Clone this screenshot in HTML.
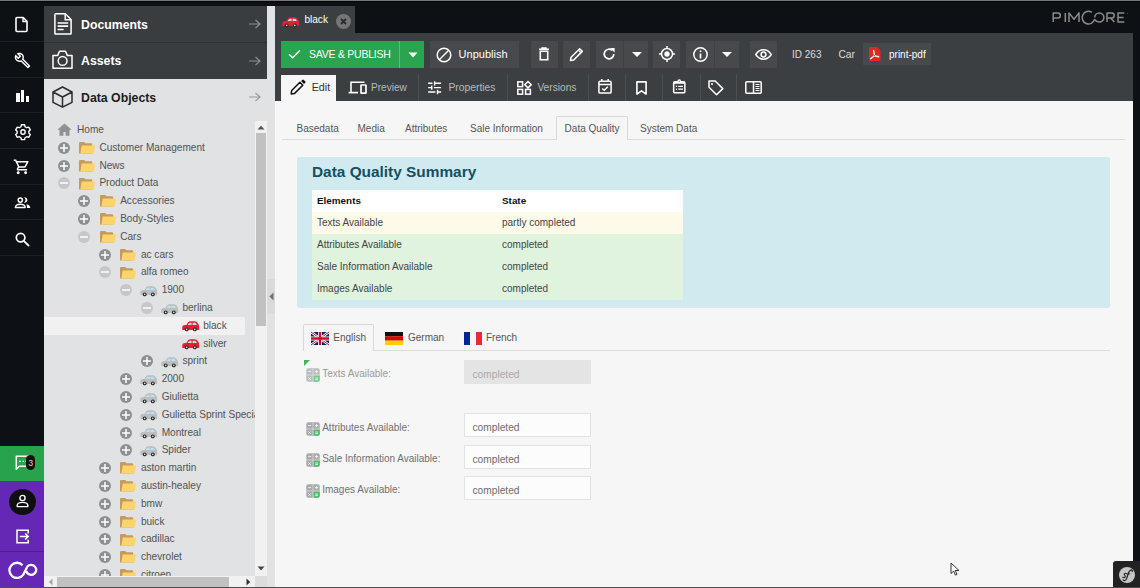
<!DOCTYPE html><html><head><meta charset="utf-8"><style>
*{box-sizing:border-box;margin:0;padding:0}
html,body{width:1140px;height:588px;overflow:hidden;background:#0d1014;font-family:"Liberation Sans",sans-serif}
body{position:relative}
div,span,svg{position:absolute}
.t{white-space:nowrap;line-height:1}
svg{overflow:visible}
</style></head><body><div style="left:0px;top:0px;width:1140px;height:1px;background:#77777b;"></div>
<div style="left:0px;top:1px;width:1140px;height:1px;background:#050608;"></div>
<div style="left:0px;top:41px;width:44px;height:1px;background:#1c1f23;"></div>
<div style="left:0px;top:77px;width:44px;height:1px;background:#1c1f23;"></div>
<div style="left:0px;top:112px;width:44px;height:1px;background:#1c1f23;"></div>
<div style="left:0px;top:148px;width:44px;height:1px;background:#1c1f23;"></div>
<div style="left:0px;top:184px;width:44px;height:1px;background:#1c1f23;"></div>
<div style="left:0px;top:219px;width:44px;height:1px;background:#1c1f23;"></div>
<div style="left:0px;top:255px;width:44px;height:1px;background:#1c1f23;"></div>
<svg style="left:15px;top:16px;" width="14" height="17" viewBox="0 0 14 17"><path d="M2 1.5h6.2l3.8 3.9v9.1a1 1 0 0 1-1 1H2a1 1 0 0 1-1-1V2.5a1 1 0 0 1 1-1z" fill="none" stroke="#fff" stroke-width="1.6" stroke-linejoin="round"/><path d="M8 1.5v4h4" fill="none" stroke="#fff" stroke-width="1.4"/></svg>
<svg style="left:13.5px;top:51.5px;" width="17" height="17" viewBox="0 0 24 24"><path d="M22.61 18.99l-9.08-9.08c.93-2.34.45-5.1-1.44-7C9.79.61 6.21.4 3.66 2.26L7.5 6.11 6.08 7.52 2.25 3.69C.39 6.23.6 9.82 2.9 12.11c1.86 1.86 4.57 2.35 6.89 1.48l9.11 9.11c.39.39 1.02.39 1.41 0l2.3-2.3c.4-.38.4-1.01 0-1.41zm-3 1.6l-9.46-9.46c-.61.45-1.29.72-2 .82-1.36.2-2.79-.21-3.830-1.25C3.37 9.76 2.93 8.5 3 7.26l3.09 3.09 4.24-4.24-3.09-3.09c1.24-.07 2.49.37 3.44 1.31 1.08 1.08 1.49 2.570 1.24 3.96-.12.71-.42 1.37-.88 1.96l9.45 9.45-.88.89z" fill="#fff"/></svg>
<div style="left:16px;top:93px;width:3.5px;height:9px;background:#ffffff;"></div>
<div style="left:21px;top:90px;width:3.4px;height:12px;background:#ffffff;"></div>
<div style="left:25.5px;top:96px;width:3.3px;height:6px;background:#ffffff;"></div>
<svg style="left:14.5px;top:123.5px;" width="16" height="16" viewBox="0 0 16 16"><g transform="translate(8 8)"><path d="M-1.6-7.2h3.2l.5 2a5.5 5.5 0 0 1 1.6.9l2-.6 1.6 2.8-1.5 1.4a5.5 5.5 0 0 1 0 1.8l1.5 1.4-1.6 2.8-2-.6a5.5 5.5 0 0 1-1.6.9l-.5 2h-3.2l-.5-2a5.5 5.5 0 0 1-1.6-.9l-2 .6-1.6-2.8 1.5-1.4a5.5 5.5 0 0 1 0-1.8l-1.5-1.4 1.6-2.8 2 .6a5.5 5.5 0 0 1 1.6-.9z" fill="none" stroke="#fff" stroke-width="1.4" stroke-linejoin="round"/><circle r="2.2" fill="none" stroke="#fff" stroke-width="1.4"/></g></svg>
<svg style="left:13.3px;top:158.4px;" width="17.8" height="17.8" viewBox="0 0 24 24"><path d="M15.55 13c.75 0 1.41-.41 1.75-1.03l3.58-6.49A.996.996 0 0 0 20.010 4H5.21l-.94-2H1v2h2l3.6 7.59-1.35 2.44C4.52 15.37 5.48 17 7 17h12v-2H7l1.1-2h7.45zM6.16 6h12.15l-2.76 5H8.53L6.16 6zM7 18c-1.1 0-1.99.9-1.99 2S5.9 22 7 22s2-.9 2-2-.9-2-2-2zm10 0c-1.1 0-1.99.9-1.99 2s.89 2 1.99 2 2-.9 2-2-.9-2-2-2z" fill="#fff"/></svg>
<svg style="left:14px;top:197px;" width="17" height="12" viewBox="0 0 17 12"><circle cx="6.3" cy="3.1" r="2.1" fill="none" stroke="#fff" stroke-width="1.5"/><path d="M9.9 .3Q13.4.6 13.4 3.1Q13.4 5.6 9.9 5.9Q11.5 4.8 11.5 3.1Q11.5 1.4 9.9.3Z" fill="#fff"/><path d="M1.4 10.4C1.6 8 3.8 7.3 6.3 7.3S11 8 11.2 10.4Z" fill="none" stroke="#fff" stroke-width="1.5" stroke-linejoin="round"/><path d="M12.4 7.3Q16.2 8 16.3 11.1H13Q13 8.8 12.4 7.3Z" fill="#fff"/></svg>
<svg style="left:15px;top:232px;" width="15" height="14" viewBox="0 0 15 14"><circle cx="5.6" cy="5.6" r="4.3" fill="none" stroke="#fff" stroke-width="1.7"/><path d="M8.8 8.8l4.8 4.8" stroke="#fff" stroke-width="1.9" stroke-linecap="round"/></svg>
<div style="left:0px;top:446px;width:44px;height:35px;background:#29a24c;"></div>
<svg style="left:14.5px;top:454.6px;" width="22" height="18" viewBox="0 0 22 18"><path d="M1.3 1.3h14v10h-11l-3 3z" fill="none" stroke="#fff" stroke-width="1.5" stroke-linejoin="round"/><circle cx="5" cy="6.3" r=".9" fill="#fff"/><circle cx="8.2" cy="6.3" r=".9" fill="#fff"/><circle cx="11.4" cy="6.3" r=".9" fill="#fff"/></svg>
<div style="left:26.1px;top:454.7px;width:9.2px;height:15px;background:#111;border-radius:4.6px"></div>
<span class="t" style="left:28.4px;top:459.6px;font-size:8.2px;color:#e6dccc;font-weight:400;">3</span>
<div style="left:0px;top:481px;width:44px;height:107px;background:#6428b4;"></div>
<div style="left:0px;top:551px;width:44px;height:1px;background:#4e1f90;"></div>
<div style="left:9px;top:489px;width:27px;height:26px;border-radius:50%;background:#0f0f12"></div>
<svg style="left:15px;top:494px;" width="15" height="14" viewBox="0 0 15 14"><circle cx="7.5" cy="4" r="2.6" fill="none" stroke="#fff" stroke-width="1.4"/><path d="M2.2 12.6v-1.2c0-1.8 2.6-3 5.3-3s5.3 1.2 5.3 3v1.2z" fill="none" stroke="#fff" stroke-width="1.4" stroke-linejoin="round"/></svg>
<svg style="left:15px;top:529px;" width="15" height="15" viewBox="0 0 15 15"><path d="M6 1.2H2v12.6h11.2v-3M13.2 4.5V1.2H6" fill="none" stroke="#fff" stroke-width="1.5"/><path d="M4.8 7.5h8.4M10.2 4.5l3 3-3 3" fill="none" stroke="#fff" stroke-width="1.5"/></svg>
<svg style="left:4px;top:554px;" width="38" height="32" viewBox="0 0 38 32"><path d="M18.6 11.2A7.6 7.6 0 1 0 19.3 20.6L23.4 12.6A5 5 0 1 1 22.3 16.9" fill="none" stroke="#fff" stroke-width="2.3"/></svg>
<div style="left:44px;top:6px;width:231px;height:581px;background:#e1e2e3;"></div>
<div style="left:44px;top:6px;width:223px;height:36px;background:#3a3d40;"></div>
<div style="left:44px;top:42px;width:223px;height:1px;background:#2f3235;"></div>
<div style="left:44px;top:43px;width:223px;height:36px;background:#3a3d40;"></div>
<div style="left:267px;top:6px;width:8px;height:581px;background:#e1e2e3;"></div>
<span class="t" style="left:81px;top:18.6px;font-size:12.3px;color:#ffffff;font-weight:700;">Documents</span>
<span class="t" style="left:81px;top:55.2px;font-size:12.3px;color:#ffffff;font-weight:700;">Assets</span>
<span class="t" style="left:81px;top:91.6px;font-size:12.3px;color:#1b1d1f;font-weight:700;">Data Objects</span>
<svg style="left:54px;top:13px;" width="18" height="22" viewBox="0 0 18 22"><path d="M1.6 .8H11.4L17.1 6.6V20.4Q17.1 21.1 16.4 21.1H1.6Q.9 21.1.9 20.4V1.5Q.9.8 1.6.8Z" fill="none" stroke="#fff" stroke-width="1.5" stroke-linejoin="round"/><path d="M11.2 .9V6.8H17" fill="none" stroke="#fff" stroke-width="1.4"/><path d="M3.6 10h10.6M3.6 13.2h10.6M3.6 16.5h6" stroke="#fff" stroke-width="1.7"/></svg>
<svg style="left:52px;top:50px;" width="21" height="20" viewBox="0 0 21 20"><path d="M1 5.6H5.6L7.5 1.2H13.5L15.4 5.6H20V18.3H1Z" fill="none" stroke="#fff" stroke-width="1.5" stroke-linejoin="round"/><circle cx="10.6" cy="10.9" r="4.4" fill="none" stroke="#fff" stroke-width="1.5"/></svg>
<svg style="left:52px;top:85.5px;" width="21" height="22" viewBox="0 0 21 22"><path d="M10.5 1L20 6V16.3L10.5 21.2 1 16.3V6Z M1 6L10.5 11 20 6M10.5 11V21.2" fill="none" stroke="#2a2c2e" stroke-width="1.5" stroke-linejoin="round"/></svg>
<svg style="left:248px;top:19.2px;" width="14" height="10" viewBox="0 0 14 10"><path d="M1 5h11M7.5 1l4.5 4-4.5 4" fill="none" stroke="#8a8c8e" stroke-width="1.2"/></svg>
<svg style="left:248px;top:55.7px;" width="14" height="10" viewBox="0 0 14 10"><path d="M1 5h11M7.5 1l4.5 4-4.5 4" fill="none" stroke="#8a8c8e" stroke-width="1.2"/></svg>
<svg style="left:248px;top:92px;" width="14" height="10" viewBox="0 0 14 10"><path d="M1 5h11M7.5 1l4.5 4-4.5 4" fill="none" stroke="#9a9c9e" stroke-width="1.2"/></svg>
<div style="left:44px;top:115px;width:211px;height:461px;overflow:hidden">
<svg style="left:13px;top:7.9999999999999885px;" width="15" height="13" viewBox="0 0 15 13"><path d="M7.5.5L.3 6.8h2.2v5.9h3.9V9h2.2v3.7h3.9V6.8h2.2z" fill="#8f9193"/></svg>
<span class="t" style="left:33px;top:9.949999999999989px;font-size:10.1px;color:#505254;font-weight:400;">Home</span>
<svg style="left:13.5px;top:26.700000000000003px;" width="12" height="12" viewBox="0 0 12 12"><circle cx="6" cy="6" r="6" fill="#8e8f91"/><path d="M2 6h8" stroke="#fff" stroke-width="1.5"/><path d="M6 2v8" stroke="#fff" stroke-width="1.5"/></svg>
<svg style="left:34.8px;top:26.900000000000002px;" width="17" height="12" viewBox="0 0 17 12"><path d="M0 1Q0 0 1 0H5.2L6.4 1.3H12.3Q13.2 1.3 13.2 2.2V11.6H0Z" fill="#c59b5d"/><path d="M2.7 3.4H16.1L14.8 11.6H1.4Z" fill="#fdd36c"/></svg>
<span class="t" style="left:55.4px;top:27.75px;font-size:10.1px;color:#505254;font-weight:400;">Customer Management</span>
<svg style="left:13.5px;top:44.499999999999986px;" width="12" height="12" viewBox="0 0 12 12"><circle cx="6" cy="6" r="6" fill="#8e8f91"/><path d="M2 6h8" stroke="#fff" stroke-width="1.5"/><path d="M6 2v8" stroke="#fff" stroke-width="1.5"/></svg>
<svg style="left:34.8px;top:44.69999999999998px;" width="17" height="12" viewBox="0 0 17 12"><path d="M0 1Q0 0 1 0H5.2L6.4 1.3H12.3Q13.2 1.3 13.2 2.2V11.6H0Z" fill="#c59b5d"/><path d="M2.7 3.4H16.1L14.8 11.6H1.4Z" fill="#fdd36c"/></svg>
<span class="t" style="left:55.4px;top:45.54999999999998px;font-size:10.1px;color:#505254;font-weight:400;">News</span>
<svg style="left:13.5px;top:62.29999999999999px;" width="12" height="12" viewBox="0 0 12 12"><circle cx="6" cy="6" r="6" fill="#c6c7c9"/><path d="M2 6h8" stroke="#fff" stroke-width="1.5"/></svg>
<svg style="left:34.8px;top:62.499999999999986px;" width="17" height="12" viewBox="0 0 17 12"><path d="M0 1Q0 0 1 0H5.2L6.4 1.3H12.3Q13.2 1.3 13.2 2.2V11.6H0Z" fill="#c59b5d"/><path d="M2.7 3.4H16.1L14.8 11.6H1.4Z" fill="#fdd36c"/></svg>
<span class="t" style="left:55.4px;top:63.349999999999994px;font-size:10.1px;color:#505254;font-weight:400;">Product Data</span>
<svg style="left:34.25px;top:80.09999999999997px;" width="12" height="12" viewBox="0 0 12 12"><circle cx="6" cy="6" r="6" fill="#8e8f91"/><path d="M2 6h8" stroke="#fff" stroke-width="1.5"/><path d="M6 2v8" stroke="#fff" stroke-width="1.5"/></svg>
<svg style="left:55.55px;top:80.29999999999997px;" width="17" height="12" viewBox="0 0 17 12"><path d="M0 1Q0 0 1 0H5.2L6.4 1.3H12.3Q13.2 1.3 13.2 2.2V11.6H0Z" fill="#c59b5d"/><path d="M2.7 3.4H16.1L14.8 11.6H1.4Z" fill="#fdd36c"/></svg>
<span class="t" style="left:76.15px;top:81.14999999999998px;font-size:10.1px;color:#505254;font-weight:400;">Accessories</span>
<svg style="left:34.25px;top:97.89999999999998px;" width="12" height="12" viewBox="0 0 12 12"><circle cx="6" cy="6" r="6" fill="#8e8f91"/><path d="M2 6h8" stroke="#fff" stroke-width="1.5"/><path d="M6 2v8" stroke="#fff" stroke-width="1.5"/></svg>
<svg style="left:55.55px;top:98.09999999999998px;" width="17" height="12" viewBox="0 0 17 12"><path d="M0 1Q0 0 1 0H5.2L6.4 1.3H12.3Q13.2 1.3 13.2 2.2V11.6H0Z" fill="#c59b5d"/><path d="M2.7 3.4H16.1L14.8 11.6H1.4Z" fill="#fdd36c"/></svg>
<span class="t" style="left:76.15px;top:98.94999999999999px;font-size:10.1px;color:#505254;font-weight:400;">Body-Styles</span>
<svg style="left:34.25px;top:115.69999999999999px;" width="12" height="12" viewBox="0 0 12 12"><circle cx="6" cy="6" r="6" fill="#c6c7c9"/><path d="M2 6h8" stroke="#fff" stroke-width="1.5"/></svg>
<svg style="left:55.55px;top:115.89999999999999px;" width="17" height="12" viewBox="0 0 17 12"><path d="M0 1Q0 0 1 0H5.2L6.4 1.3H12.3Q13.2 1.3 13.2 2.2V11.6H0Z" fill="#c59b5d"/><path d="M2.7 3.4H16.1L14.8 11.6H1.4Z" fill="#fdd36c"/></svg>
<span class="t" style="left:76.15px;top:116.75px;font-size:10.1px;color:#505254;font-weight:400;">Cars</span>
<svg style="left:55.0px;top:133.5px;" width="12" height="12" viewBox="0 0 12 12"><circle cx="6" cy="6" r="6" fill="#8e8f91"/><path d="M2 6h8" stroke="#fff" stroke-width="1.5"/><path d="M6 2v8" stroke="#fff" stroke-width="1.5"/></svg>
<svg style="left:76.3px;top:133.70000000000002px;" width="17" height="12" viewBox="0 0 17 12"><path d="M0 1Q0 0 1 0H5.2L6.4 1.3H12.3Q13.2 1.3 13.2 2.2V11.6H0Z" fill="#c59b5d"/><path d="M2.7 3.4H16.1L14.8 11.6H1.4Z" fill="#fdd36c"/></svg>
<span class="t" style="left:96.9px;top:134.55px;font-size:10.1px;color:#505254;font-weight:400;">ac cars</span>
<svg style="left:55.0px;top:151.3px;" width="12" height="12" viewBox="0 0 12 12"><circle cx="6" cy="6" r="6" fill="#c6c7c9"/><path d="M2 6h8" stroke="#fff" stroke-width="1.5"/></svg>
<svg style="left:76.3px;top:151.50000000000003px;" width="17" height="12" viewBox="0 0 17 12"><path d="M0 1Q0 0 1 0H5.2L6.4 1.3H12.3Q13.2 1.3 13.2 2.2V11.6H0Z" fill="#c59b5d"/><path d="M2.7 3.4H16.1L14.8 11.6H1.4Z" fill="#fdd36c"/></svg>
<span class="t" style="left:96.9px;top:152.35000000000002px;font-size:10.1px;color:#505254;font-weight:400;">alfa romeo</span>
<svg style="left:75.75px;top:169.09999999999997px;" width="12" height="12" viewBox="0 0 12 12"><circle cx="6" cy="6" r="6" fill="#c6c7c9"/><path d="M2 6h8" stroke="#fff" stroke-width="1.5"/></svg>
<svg style="left:96.25px;top:170.69999999999996px;" width="18" height="11" viewBox="0 0 18 11"><path d="M.3 8.6V6Q.3 4.6 1.8 4.3L4.6 3.8Q5.8 1.2 7.2.6Q8 .3 9 .3H12.8Q14.5.3 15.6 1.8Q17.2 3.8 17.2 6.2V8.6Q17.2 9.1 16.7 9.1H.8Q.3 9.1.3 8.6Z" fill="#bdbdbd"/><path d="M5.6 4.1Q6.6 2 8 1.8H9.6V4.1ZM10.6 4.1V1.8H13Q14.3 2 14.8 4.1Z" fill="#b8e4f4"/><circle cx="4.7" cy="8.4" r="1.9" fill="#222"/><circle cx="12.8" cy="8.4" r="1.9" fill="#222"/><circle cx="4.7" cy="8.4" r=".8" fill="#e8e8e8"/><circle cx="12.8" cy="8.4" r=".8" fill="#e8e8e8"/></svg>
<span class="t" style="left:117.65px;top:170.14999999999998px;font-size:10.1px;color:#505254;font-weight:400;">1900</span>
<svg style="left:96.5px;top:186.89999999999998px;" width="12" height="12" viewBox="0 0 12 12"><circle cx="6" cy="6" r="6" fill="#c6c7c9"/><path d="M2 6h8" stroke="#fff" stroke-width="1.5"/></svg>
<svg style="left:117.0px;top:188.49999999999997px;" width="18" height="11" viewBox="0 0 18 11"><path d="M.3 8.6V6Q.3 4.6 1.8 4.3L4.6 3.8Q5.8 1.2 7.2.6Q8 .3 9 .3H12.8Q14.5.3 15.6 1.8Q17.2 3.8 17.2 6.2V8.6Q17.2 9.1 16.7 9.1H.8Q.3 9.1.3 8.6Z" fill="#bdbdbd"/><path d="M5.6 4.1Q6.6 2 8 1.8H9.6V4.1ZM10.6 4.1V1.8H13Q14.3 2 14.8 4.1Z" fill="#b8e4f4"/><circle cx="4.7" cy="8.4" r="1.9" fill="#222"/><circle cx="12.8" cy="8.4" r="1.9" fill="#222"/><circle cx="4.7" cy="8.4" r=".8" fill="#e8e8e8"/><circle cx="12.8" cy="8.4" r=".8" fill="#e8e8e8"/></svg>
<span class="t" style="left:138.4px;top:187.95px;font-size:10.1px;color:#505254;font-weight:400;">berlina</span>
<div style="left:0px;top:201.9px;width:201px;height:18.3px;background:#f1f1f2;"></div>
<svg style="left:137.75px;top:206.29999999999998px;" width="18" height="11" viewBox="0 0 18 11"><path d="M.3 8.6V6Q.3 4.6 1.8 4.3L4.6 3.8Q5.8 1.2 7.2.6Q8 .3 9 .3H12.8Q14.5.3 15.6 1.8Q17.2 3.8 17.2 6.2V8.6Q17.2 9.1 16.7 9.1H.8Q.3 9.1.3 8.6Z" fill="#e3202f"/><path d="M5.6 4.1Q6.6 2 8 1.8H9.6V4.1ZM10.6 4.1V1.8H13Q14.3 2 14.8 4.1Z" fill="#b8e4f4"/><circle cx="4.7" cy="8.4" r="1.9" fill="#222"/><circle cx="12.8" cy="8.4" r="1.9" fill="#222"/><circle cx="4.7" cy="8.4" r=".8" fill="#e8e8e8"/><circle cx="12.8" cy="8.4" r=".8" fill="#e8e8e8"/></svg>
<span class="t" style="left:159.15px;top:205.75px;font-size:10.1px;color:#505254;font-weight:400;">black</span>
<svg style="left:137.75px;top:224.1px;" width="18" height="11" viewBox="0 0 18 11"><path d="M.3 8.6V6Q.3 4.6 1.8 4.3L4.6 3.8Q5.8 1.2 7.2.6Q8 .3 9 .3H12.8Q14.5.3 15.6 1.8Q17.2 3.8 17.2 6.2V8.6Q17.2 9.1 16.7 9.1H.8Q.3 9.1.3 8.6Z" fill="#e3202f"/><path d="M5.6 4.1Q6.6 2 8 1.8H9.6V4.1ZM10.6 4.1V1.8H13Q14.3 2 14.8 4.1Z" fill="#b8e4f4"/><circle cx="4.7" cy="8.4" r="1.9" fill="#222"/><circle cx="12.8" cy="8.4" r="1.9" fill="#222"/><circle cx="4.7" cy="8.4" r=".8" fill="#e8e8e8"/><circle cx="12.8" cy="8.4" r=".8" fill="#e8e8e8"/></svg>
<span class="t" style="left:159.15px;top:223.55px;font-size:10.1px;color:#505254;font-weight:400;">silver</span>
<svg style="left:96.5px;top:240.3px;" width="12" height="12" viewBox="0 0 12 12"><circle cx="6" cy="6" r="6" fill="#8e8f91"/><path d="M2 6h8" stroke="#fff" stroke-width="1.5"/><path d="M6 2v8" stroke="#fff" stroke-width="1.5"/></svg>
<svg style="left:117.0px;top:241.9px;" width="18" height="11" viewBox="0 0 18 11"><path d="M.3 8.6V6Q.3 4.6 1.8 4.3L4.6 3.8Q5.8 1.2 7.2.6Q8 .3 9 .3H12.8Q14.5.3 15.6 1.8Q17.2 3.8 17.2 6.2V8.6Q17.2 9.1 16.7 9.1H.8Q.3 9.1.3 8.6Z" fill="#bdbdbd"/><path d="M5.6 4.1Q6.6 2 8 1.8H9.6V4.1ZM10.6 4.1V1.8H13Q14.3 2 14.8 4.1Z" fill="#b8e4f4"/><circle cx="4.7" cy="8.4" r="1.9" fill="#222"/><circle cx="12.8" cy="8.4" r="1.9" fill="#222"/><circle cx="4.7" cy="8.4" r=".8" fill="#e8e8e8"/><circle cx="12.8" cy="8.4" r=".8" fill="#e8e8e8"/></svg>
<span class="t" style="left:138.4px;top:241.35000000000002px;font-size:10.1px;color:#505254;font-weight:400;">sprint</span>
<svg style="left:75.75px;top:258.1px;" width="12" height="12" viewBox="0 0 12 12"><circle cx="6" cy="6" r="6" fill="#8e8f91"/><path d="M2 6h8" stroke="#fff" stroke-width="1.5"/><path d="M6 2v8" stroke="#fff" stroke-width="1.5"/></svg>
<svg style="left:96.25px;top:259.7px;" width="18" height="11" viewBox="0 0 18 11"><path d="M.3 8.6V6Q.3 4.6 1.8 4.3L4.6 3.8Q5.8 1.2 7.2.6Q8 .3 9 .3H12.8Q14.5.3 15.6 1.8Q17.2 3.8 17.2 6.2V8.6Q17.2 9.1 16.7 9.1H.8Q.3 9.1.3 8.6Z" fill="#bdbdbd"/><path d="M5.6 4.1Q6.6 2 8 1.8H9.6V4.1ZM10.6 4.1V1.8H13Q14.3 2 14.8 4.1Z" fill="#b8e4f4"/><circle cx="4.7" cy="8.4" r="1.9" fill="#222"/><circle cx="12.8" cy="8.4" r="1.9" fill="#222"/><circle cx="4.7" cy="8.4" r=".8" fill="#e8e8e8"/><circle cx="12.8" cy="8.4" r=".8" fill="#e8e8e8"/></svg>
<span class="t" style="left:117.65px;top:259.15px;font-size:10.1px;color:#505254;font-weight:400;">2000</span>
<svg style="left:75.75px;top:275.90000000000003px;" width="12" height="12" viewBox="0 0 12 12"><circle cx="6" cy="6" r="6" fill="#8e8f91"/><path d="M2 6h8" stroke="#fff" stroke-width="1.5"/><path d="M6 2v8" stroke="#fff" stroke-width="1.5"/></svg>
<svg style="left:96.25px;top:277.5px;" width="18" height="11" viewBox="0 0 18 11"><path d="M.3 8.6V6Q.3 4.6 1.8 4.3L4.6 3.8Q5.8 1.2 7.2.6Q8 .3 9 .3H12.8Q14.5.3 15.6 1.8Q17.2 3.8 17.2 6.2V8.6Q17.2 9.1 16.7 9.1H.8Q.3 9.1.3 8.6Z" fill="#bdbdbd"/><path d="M5.6 4.1Q6.6 2 8 1.8H9.6V4.1ZM10.6 4.1V1.8H13Q14.3 2 14.8 4.1Z" fill="#b8e4f4"/><circle cx="4.7" cy="8.4" r="1.9" fill="#222"/><circle cx="12.8" cy="8.4" r="1.9" fill="#222"/><circle cx="4.7" cy="8.4" r=".8" fill="#e8e8e8"/><circle cx="12.8" cy="8.4" r=".8" fill="#e8e8e8"/></svg>
<span class="t" style="left:117.65px;top:276.95px;font-size:10.1px;color:#505254;font-weight:400;">Giulietta</span>
<svg style="left:75.75px;top:293.70000000000005px;" width="12" height="12" viewBox="0 0 12 12"><circle cx="6" cy="6" r="6" fill="#8e8f91"/><path d="M2 6h8" stroke="#fff" stroke-width="1.5"/><path d="M6 2v8" stroke="#fff" stroke-width="1.5"/></svg>
<svg style="left:96.25px;top:295.3px;" width="18" height="11" viewBox="0 0 18 11"><path d="M.3 8.6V6Q.3 4.6 1.8 4.3L4.6 3.8Q5.8 1.2 7.2.6Q8 .3 9 .3H12.8Q14.5.3 15.6 1.8Q17.2 3.8 17.2 6.2V8.6Q17.2 9.1 16.7 9.1H.8Q.3 9.1.3 8.6Z" fill="#bdbdbd"/><path d="M5.6 4.1Q6.6 2 8 1.8H9.6V4.1ZM10.6 4.1V1.8H13Q14.3 2 14.8 4.1Z" fill="#b8e4f4"/><circle cx="4.7" cy="8.4" r="1.9" fill="#222"/><circle cx="12.8" cy="8.4" r="1.9" fill="#222"/><circle cx="4.7" cy="8.4" r=".8" fill="#e8e8e8"/><circle cx="12.8" cy="8.4" r=".8" fill="#e8e8e8"/></svg>
<span class="t" style="left:117.65px;top:294.75px;font-size:10.1px;color:#505254;font-weight:400;">Gulietta Sprint Speciale</span>
<svg style="left:75.75px;top:311.50000000000006px;" width="12" height="12" viewBox="0 0 12 12"><circle cx="6" cy="6" r="6" fill="#8e8f91"/><path d="M2 6h8" stroke="#fff" stroke-width="1.5"/><path d="M6 2v8" stroke="#fff" stroke-width="1.5"/></svg>
<svg style="left:96.25px;top:313.1px;" width="18" height="11" viewBox="0 0 18 11"><path d="M.3 8.6V6Q.3 4.6 1.8 4.3L4.6 3.8Q5.8 1.2 7.2.6Q8 .3 9 .3H12.8Q14.5.3 15.6 1.8Q17.2 3.8 17.2 6.2V8.6Q17.2 9.1 16.7 9.1H.8Q.3 9.1.3 8.6Z" fill="#bdbdbd"/><path d="M5.6 4.1Q6.6 2 8 1.8H9.6V4.1ZM10.6 4.1V1.8H13Q14.3 2 14.8 4.1Z" fill="#b8e4f4"/><circle cx="4.7" cy="8.4" r="1.9" fill="#222"/><circle cx="12.8" cy="8.4" r="1.9" fill="#222"/><circle cx="4.7" cy="8.4" r=".8" fill="#e8e8e8"/><circle cx="12.8" cy="8.4" r=".8" fill="#e8e8e8"/></svg>
<span class="t" style="left:117.65px;top:312.55px;font-size:10.1px;color:#505254;font-weight:400;">Montreal</span>
<svg style="left:75.75px;top:329.30000000000007px;" width="12" height="12" viewBox="0 0 12 12"><circle cx="6" cy="6" r="6" fill="#8e8f91"/><path d="M2 6h8" stroke="#fff" stroke-width="1.5"/><path d="M6 2v8" stroke="#fff" stroke-width="1.5"/></svg>
<svg style="left:96.25px;top:330.90000000000003px;" width="18" height="11" viewBox="0 0 18 11"><path d="M.3 8.6V6Q.3 4.6 1.8 4.3L4.6 3.8Q5.8 1.2 7.2.6Q8 .3 9 .3H12.8Q14.5.3 15.6 1.8Q17.2 3.8 17.2 6.2V8.6Q17.2 9.1 16.7 9.1H.8Q.3 9.1.3 8.6Z" fill="#bdbdbd"/><path d="M5.6 4.1Q6.6 2 8 1.8H9.6V4.1ZM10.6 4.1V1.8H13Q14.3 2 14.8 4.1Z" fill="#b8e4f4"/><circle cx="4.7" cy="8.4" r="1.9" fill="#222"/><circle cx="12.8" cy="8.4" r="1.9" fill="#222"/><circle cx="4.7" cy="8.4" r=".8" fill="#e8e8e8"/><circle cx="12.8" cy="8.4" r=".8" fill="#e8e8e8"/></svg>
<span class="t" style="left:117.65px;top:330.35px;font-size:10.1px;color:#505254;font-weight:400;">Spider</span>
<svg style="left:55.0px;top:347.1px;" width="12" height="12" viewBox="0 0 12 12"><circle cx="6" cy="6" r="6" fill="#8e8f91"/><path d="M2 6h8" stroke="#fff" stroke-width="1.5"/><path d="M6 2v8" stroke="#fff" stroke-width="1.5"/></svg>
<svg style="left:76.3px;top:347.3px;" width="17" height="12" viewBox="0 0 17 12"><path d="M0 1Q0 0 1 0H5.2L6.4 1.3H12.3Q13.2 1.3 13.2 2.2V11.6H0Z" fill="#c59b5d"/><path d="M2.7 3.4H16.1L14.8 11.6H1.4Z" fill="#fdd36c"/></svg>
<span class="t" style="left:96.9px;top:348.15px;font-size:10.1px;color:#505254;font-weight:400;">aston martin</span>
<svg style="left:55.0px;top:364.90000000000003px;" width="12" height="12" viewBox="0 0 12 12"><circle cx="6" cy="6" r="6" fill="#8e8f91"/><path d="M2 6h8" stroke="#fff" stroke-width="1.5"/><path d="M6 2v8" stroke="#fff" stroke-width="1.5"/></svg>
<svg style="left:76.3px;top:365.1px;" width="17" height="12" viewBox="0 0 17 12"><path d="M0 1Q0 0 1 0H5.2L6.4 1.3H12.3Q13.2 1.3 13.2 2.2V11.6H0Z" fill="#c59b5d"/><path d="M2.7 3.4H16.1L14.8 11.6H1.4Z" fill="#fdd36c"/></svg>
<span class="t" style="left:96.9px;top:365.95px;font-size:10.1px;color:#505254;font-weight:400;">austin-healey</span>
<svg style="left:55.0px;top:382.70000000000005px;" width="12" height="12" viewBox="0 0 12 12"><circle cx="6" cy="6" r="6" fill="#8e8f91"/><path d="M2 6h8" stroke="#fff" stroke-width="1.5"/><path d="M6 2v8" stroke="#fff" stroke-width="1.5"/></svg>
<svg style="left:76.3px;top:382.90000000000003px;" width="17" height="12" viewBox="0 0 17 12"><path d="M0 1Q0 0 1 0H5.2L6.4 1.3H12.3Q13.2 1.3 13.2 2.2V11.6H0Z" fill="#c59b5d"/><path d="M2.7 3.4H16.1L14.8 11.6H1.4Z" fill="#fdd36c"/></svg>
<span class="t" style="left:96.9px;top:383.75px;font-size:10.1px;color:#505254;font-weight:400;">bmw</span>
<svg style="left:55.0px;top:400.5px;" width="12" height="12" viewBox="0 0 12 12"><circle cx="6" cy="6" r="6" fill="#8e8f91"/><path d="M2 6h8" stroke="#fff" stroke-width="1.5"/><path d="M6 2v8" stroke="#fff" stroke-width="1.5"/></svg>
<svg style="left:76.3px;top:400.7px;" width="17" height="12" viewBox="0 0 17 12"><path d="M0 1Q0 0 1 0H5.2L6.4 1.3H12.3Q13.2 1.3 13.2 2.2V11.6H0Z" fill="#c59b5d"/><path d="M2.7 3.4H16.1L14.8 11.6H1.4Z" fill="#fdd36c"/></svg>
<span class="t" style="left:96.9px;top:401.54999999999995px;font-size:10.1px;color:#505254;font-weight:400;">buick</span>
<svg style="left:55.0px;top:418.30000000000007px;" width="12" height="12" viewBox="0 0 12 12"><circle cx="6" cy="6" r="6" fill="#8e8f91"/><path d="M2 6h8" stroke="#fff" stroke-width="1.5"/><path d="M6 2v8" stroke="#fff" stroke-width="1.5"/></svg>
<svg style="left:76.3px;top:418.50000000000006px;" width="17" height="12" viewBox="0 0 17 12"><path d="M0 1Q0 0 1 0H5.2L6.4 1.3H12.3Q13.2 1.3 13.2 2.2V11.6H0Z" fill="#c59b5d"/><path d="M2.7 3.4H16.1L14.8 11.6H1.4Z" fill="#fdd36c"/></svg>
<span class="t" style="left:96.9px;top:419.35px;font-size:10.1px;color:#505254;font-weight:400;">cadillac</span>
<svg style="left:55.0px;top:436.10000000000014px;" width="12" height="12" viewBox="0 0 12 12"><circle cx="6" cy="6" r="6" fill="#8e8f91"/><path d="M2 6h8" stroke="#fff" stroke-width="1.5"/><path d="M6 2v8" stroke="#fff" stroke-width="1.5"/></svg>
<svg style="left:76.3px;top:436.3000000000001px;" width="17" height="12" viewBox="0 0 17 12"><path d="M0 1Q0 0 1 0H5.2L6.4 1.3H12.3Q13.2 1.3 13.2 2.2V11.6H0Z" fill="#c59b5d"/><path d="M2.7 3.4H16.1L14.8 11.6H1.4Z" fill="#fdd36c"/></svg>
<span class="t" style="left:96.9px;top:437.1500000000001px;font-size:10.1px;color:#505254;font-weight:400;">chevrolet</span>
<svg style="left:55.0px;top:453.9000000000001px;" width="12" height="12" viewBox="0 0 12 12"><circle cx="6" cy="6" r="6" fill="#8e8f91"/><path d="M2 6h8" stroke="#fff" stroke-width="1.5"/><path d="M6 2v8" stroke="#fff" stroke-width="1.5"/></svg>
<svg style="left:76.3px;top:454.1000000000001px;" width="17" height="12" viewBox="0 0 17 12"><path d="M0 1Q0 0 1 0H5.2L6.4 1.3H12.3Q13.2 1.3 13.2 2.2V11.6H0Z" fill="#c59b5d"/><path d="M2.7 3.4H16.1L14.8 11.6H1.4Z" fill="#fdd36c"/></svg>
<span class="t" style="left:96.9px;top:454.95000000000005px;font-size:10.1px;color:#505254;font-weight:400;">citroen</span>
</div>
<div style="left:255px;top:121px;width:12px;height:455px;background:#f1f1f1;"></div>
<div style="left:256px;top:133px;width:10px;height:193px;background:#c1c1c1;"></div>
<svg style="left:257px;top:125px;" width="8" height="5" viewBox="0 0 8 5"><path d="M.5 4.5L4 .8l3.5 3.7z" fill="#555"/></svg>
<svg style="left:257px;top:566px;" width="8" height="5" viewBox="0 0 8 5"><path d="M.5.5L4 4.2 7.5.5z" fill="#444"/></svg>
<div style="left:44px;top:576px;width:211px;height:11px;background:#f1f1f1;"></div>
<div style="left:57px;top:577px;width:172px;height:10px;background:#c1c1c1;"></div>
<svg style="left:48px;top:578px;" width="5" height="8" viewBox="0 0 5 8"><path d="M4.5.5L.8 4l3.7 3.5z" fill="#aaa"/></svg>
<svg style="left:246px;top:578px;" width="5" height="8" viewBox="0 0 5 8"><path d="M.5.5L4.2 4 .5 7.5z" fill="#333"/></svg>
<div style="left:255px;top:576px;width:12px;height:11px;background:#dcdcdc;"></div>
<div style="left:267px;top:279px;width:8px;height:35px;background:#d9dadb;"></div>
<svg style="left:268.5px;top:292px;" width="5" height="9" viewBox="0 0 5 9"><path d="M4.5.5L.5 4.5l4 4z" fill="#6d6f71"/></svg>
<div style="left:275px;top:6px;width:80px;height:27px;background:#3c3f42;"></div>
<div style="left:275px;top:33px;width:858px;height:68px;background:#3c3f42;"></div>
<div style="left:275px;top:101px;width:858px;height:486px;background:#f6f6f6;"></div>
<div style="left:1133px;top:2px;width:7px;height:586px;background:#0d1014;"></div>
<svg style="left:282.2px;top:17px;" width="18" height="11" viewBox="0 0 18 11"><path d="M.3 8.6V6Q.3 4.6 1.8 4.3L4.6 3.8Q5.8 1.2 7.2.6Q8 .3 9 .3H12.8Q14.5.3 15.6 1.8Q17.2 3.8 17.2 6.2V8.6Q17.2 9.1 16.7 9.1H.8Q.3 9.1.3 8.6Z" fill="#e3202f"/><path d="M5.6 4.1Q6.6 2 8 1.8H9.6V4.1ZM10.6 4.1V1.8H13Q14.3 2 14.8 4.1Z" fill="#b8e4f4"/><circle cx="4.7" cy="8.4" r="1.9" fill="#222"/><circle cx="12.8" cy="8.4" r="1.9" fill="#222"/><circle cx="4.7" cy="8.4" r=".8" fill="#e8e8e8"/><circle cx="12.8" cy="8.4" r=".8" fill="#e8e8e8"/></svg>
<span class="t" style="left:304.4px;top:15.2px;font-size:10.1px;color:#ffffff;font-weight:400;">black</span>
<div style="left:336px;top:14px;width:15px;height:15px;border-radius:50%;background:#757678"></div>
<svg style="left:340px;top:18px;" width="7" height="7" viewBox="0 0 7 7"><path d="M1 1l5 5M6 1L1 6" stroke="#2a2b2c" stroke-width="1.8"/></svg>
<svg style="left:1048px;top:6.5px;" width="84" height="22" viewBox="0 0 84 22"><g fill="none" stroke="#8b8b8b" stroke-width="1.5" stroke-linejoin="round"><path d="M5.2 15.1V5.9H10Q12.3 5.9 12.3 8.45Q12.3 11 10 11H5.2M17.3 5.9V15.1M21 15.1V5.9L26 12.2 31 5.9V15.1"/><path d="M43.8 5.3A6.3 6.3 0 1 0 46.5 12.5Q48.6 15.1 51.3 15.1A4.6 4.6 0 1 0 46.7 10.5"/><path d="M59 15.1V5.9H63.8Q66.2 5.9 66.2 8.45Q66.2 11 63.8 11H59M62.5 11L66.4 15.1M76.3 5.9H70V15.1H76.3M70 10.5H75.6"/></g><circle cx="79.6" cy="6.3" r=".5" fill="#666"/></svg>
<div style="left:281px;top:41px;width:143px;height:27px;background:#2aa44e;"></div>
<div style="left:399px;top:41px;width:1px;height:27px;background:#5fbd79;"></div>
<svg style="left:288px;top:49px;" width="13" height="10" viewBox="0 0 13 10"><path d="M1 5.2l3.6 3.6L12 1.2" fill="none" stroke="#fff" stroke-width="1.5"/></svg>
<span class="t" style="left:309px;top:49.1px;font-size:10.5px;color:#ffffff;font-weight:400;letter-spacing:-0.25px">SAVE &amp; PUBLISH</span>
<svg style="left:408px;top:51.5px;" width="10" height="6" viewBox="0 0 10 6"><path d="M.5.5h9L5 5.5z" fill="#fff"/></svg>
<div style="left:430px;top:41px;width:89px;height:27px;background:#47494c;"></div>
<svg style="left:436px;top:47px;" width="16" height="16" viewBox="0 0 16 16"><circle cx="8" cy="8" r="6.8" fill="none" stroke="#fff" stroke-width="1.5"/><path d="M3.3 12.7l9.4-9.4" stroke="#fff" stroke-width="1.5"/></svg>
<span class="t" style="left:458.6px;top:49.2px;font-size:11px;color:#ffffff;font-weight:400;">Unpublish</span>
<div style="left:531px;top:41px;width:27px;height:27px;background:#47494c;"></div>
<svg style="left:538px;top:47px;" width="12" height="14" viewBox="0 0 12 14"><path d="M1 2.2h10M4 2.2V1h4v1.2" fill="none" stroke="#fff" stroke-width="1.4"/><path d="M2.3 4.2h7.4v8.6H2.3z" fill="none" stroke="#fff" stroke-width="1.6"/></svg>
<div style="left:563px;top:41px;width:27px;height:27px;background:#47494c;"></div>
<svg style="left:569px;top:47px;" width="15" height="15" viewBox="0 0 15 15"><path d="M1.5 13.5l.6-3.3 8.5-8.5 2.7 2.7-8.5 8.5z" fill="none" stroke="#fff" stroke-width="1.5" stroke-linejoin="round"/><path d="M9.2 3.1l2.7 2.7" stroke="#fff" stroke-width="1.4"/></svg>
<div style="left:596px;top:41px;width:52px;height:27px;background:#47494c;"></div>
<div style="left:623px;top:41px;width:1px;height:27px;background:#3f4245;"></div>
<svg style="left:602px;top:47px;" width="14" height="14" viewBox="0 0 14 14"><path d="M11.8 7A4.8 4.8 0 1 1 10.3 3.5" fill="none" stroke="#fff" stroke-width="1.7"/><path d="M8 1h4.6v4.6z" fill="#fff"/></svg>
<svg style="left:632px;top:52px;" width="10" height="5" viewBox="0 0 10 5"><path d="M0 0h10L5 5z" fill="#fff"/></svg>
<div style="left:653px;top:41px;width:27px;height:27px;background:#47494c;"></div>
<svg style="left:659px;top:46px;" width="16" height="16" viewBox="0 0 16 16"><circle cx="8" cy="8" r="5.5" fill="none" stroke="#fff" stroke-width="1.5"/><circle cx="8" cy="8" r="2.7" fill="#fff"/><path d="M8 0v2.5M8 13.5V16M0 8h2.5M13.5 8H16" stroke="#fff" stroke-width="1.5"/></svg>
<div style="left:686px;top:41px;width:53px;height:27px;background:#47494c;"></div>
<div style="left:714px;top:41px;width:1px;height:27px;background:#3f4245;"></div>
<svg style="left:692.5px;top:46.5px;" width="15" height="15" viewBox="0 0 15 15"><circle cx="7.5" cy="7.5" r="6.7" fill="none" stroke="#fff" stroke-width="1.5"/><circle cx="7.5" cy="4.3" r="1" fill="#fff"/><path d="M7.5 6.5v5" stroke="#fff" stroke-width="1.7"/></svg>
<svg style="left:722px;top:52px;" width="10" height="5" viewBox="0 0 10 5"><path d="M0 0h10L5 5z" fill="#fff"/></svg>
<div style="left:750px;top:41px;width:27px;height:27px;background:#47494c;"></div>
<svg style="left:755px;top:49px;" width="17" height="11" viewBox="0 0 17 11"><path d="M.8 5.5C3 2 5.6.8 8.5.8s5.5 1.2 7.7 4.7C14 9 11.4 10.2 8.5 10.2S3 9 .8 5.5z" fill="none" stroke="#fff" stroke-width="1.5"/><circle cx="8.5" cy="5.5" r="2.4" fill="none" stroke="#fff" stroke-width="1.5"/></svg>
<span class="t" style="left:792px;top:50.0px;font-size:10px;color:#dddddd;font-weight:400;">ID 263</span>
<span class="t" style="left:838.5px;top:50.0px;font-size:10.2px;color:#dddddd;font-weight:400;">Car</span>
<div style="left:863px;top:43px;width:68px;height:22px;background:#47494c;"></div>
<svg style="left:869px;top:47px;" width="12" height="14" viewBox="0 0 12 14"><path d="M0 .8A.8.8 0 0 1 .8 0H8.3l3.2 3.6v9.6a.8.8 0 0 1-.8.8H.8a.8.8 0 0 1-.8-.8z" fill="#dc2a22"/><path d="M4.6 3.6Q5.4 6.5 5.3 8.4M5.3 8.4Q3.6 10.2 1.8 11.6M5.3 8.4Q7.4 9.4 9.6 9.8" fill="none" stroke="#f4e8e8" stroke-width="1.5" stroke-linecap="round"/><circle cx="5.3" cy="8.5" r=".6" fill="#dc2a22"/></svg>
<span class="t" style="left:889px;top:50.3px;font-size:10px;color:#ffffff;font-weight:400;">print-pdf</span>
<div style="left:281px;top:75px;width:55px;height:26px;background:#f6f6f6;"></div>
<svg style="left:286px;top:76px;" width="24" height="22" viewBox="0 0 24 22"><path d="M5.7 14.5L13.9 6.3 16.8 9.2 8.6 17.4 5.2 17.9Z" fill="none" stroke="#111" stroke-width="1.5" stroke-linejoin="round"/><path d="M15.1 5.1L16.5 3.7Q17 3.2 17.5 3.7L19.4 5.6Q19.9 6.1 19.4 6.6L18 8Z" fill="#111"/></svg>
<span class="t" style="left:311.7px;top:82.3px;font-size:10.7px;color:#333333;font-weight:400;">Edit</span>
<svg style="left:348px;top:80.5px;" width="19" height="13" viewBox="0 0 19 13"><path d="M3 11.3V1.3H16.5" fill="none" stroke="#fff" stroke-width="1.6"/><path d="M.6 11.6h9.4" stroke="#fff" stroke-width="1.7"/><rect x="13" y="4" width="5" height="8.2" rx=".5" fill="none" stroke="#fff" stroke-width="1.7"/></svg>
<span class="t" style="left:371px;top:83.0px;font-size:10.1px;color:#b7b9bb;font-weight:400;">Preview</span>
<div style="left:418px;top:74px;width:1px;height:27px;background:#4b4e51;"></div>
<div style="left:507px;top:74px;width:1px;height:27px;background:#4b4e51;"></div>
<div style="left:588px;top:74px;width:1px;height:27px;background:#4b4e51;"></div>
<div style="left:625px;top:74px;width:1px;height:27px;background:#4b4e51;"></div>
<div style="left:662px;top:74px;width:1px;height:27px;background:#4b4e51;"></div>
<div style="left:700px;top:74px;width:1px;height:27px;background:#4b4e51;"></div>
<div style="left:736px;top:74px;width:1px;height:27px;background:#4b4e51;"></div>
<svg style="left:426.2px;top:78.8px;" width="17.3" height="17.3" viewBox="0 0 24 24"><g transform="translate(0 24) scale(1 -1)"><path d="M3 17v2h6v-2H3zM3 5v2h10V5H3zm10 16v-2h8v-2h-8v-2h-2v6h2zM7 9v2H3v2h4v2h2V9H7zm14 4v-2H11v2h10zm-6-4h2V7h4V5h-4V3h-2v6z" fill="#fff"/></g></svg>
<span class="t" style="left:448.5px;top:83.0px;font-size:10.3px;color:#b7b9bb;font-weight:400;">Properties</span>
<svg style="left:517px;top:81px;" width="15" height="14" viewBox="0 0 15 14"><rect x=".8" y=".8" width="4.8" height="4.8" fill="none" stroke="#fff" stroke-width="1.5"/><path d="M11 .5l3.2 3.2L11 6.9 7.8 3.7z" fill="none" stroke="#fff" stroke-width="1.5"/><rect x=".8" y="8.4" width="4.8" height="4.8" fill="none" stroke="#fff" stroke-width="1.5"/><rect x="8.6" y="8.4" width="4.8" height="4.8" fill="none" stroke="#fff" stroke-width="1.5"/></svg>
<span class="t" style="left:537.4px;top:83.0px;font-size:10.2px;color:#b7b9bb;font-weight:400;">Versions</span>
<svg style="left:598px;top:79px;" width="14" height="15" viewBox="0 0 14 15"><rect x=".9" y="2.3" width="12.2" height="11.8" rx="1.2" fill="none" stroke="#fff" stroke-width="1.5"/><path d="M.9 5.5h12.2M3.8 0v3M10.2 0v3" stroke="#fff" stroke-width="1.5"/><path d="M4.2 9.5l2 1.8 3.6-3.6" fill="none" stroke="#fff" stroke-width="1.3"/></svg>
<svg style="left:636px;top:81px;" width="11" height="14" viewBox="0 0 11 14"><path d="M.9.9h9.2v12.2L5.5 9.8.9 13.1z" fill="none" stroke="#fff" stroke-width="1.6" stroke-linejoin="round"/></svg>
<svg style="left:672px;top:79px;" width="15" height="15" viewBox="0 0 15 15"><rect x="1.65" y="2.65" width="11.2" height="11.2" rx="1.2" fill="none" stroke="#fff" stroke-width="1.5"/><rect x="2" y="2.6" width="10.5" height="2.2" fill="#fff"/><circle cx="7.25" cy="2" r="1.8" fill="#fff"/><circle cx="7.25" cy="2.2" r=".55" fill="#3c3f42"/><circle cx="4.5" cy="7.3" r=".8" fill="#fff"/><circle cx="4.5" cy="10.2" r=".8" fill="#fff"/><path d="M6.2 7.3h4.8M6.2 10.2h4.8" stroke="#fff" stroke-width="1.2"/></svg>
<svg style="left:708px;top:80px;" width="16" height="15" viewBox="0 0 16 15"><path d="M1 1h6.2l7.6 7.6-6.2 6.2L1 7.2z" fill="none" stroke="#fff" stroke-width="1.5" stroke-linejoin="round"/><circle cx="4" cy="4" r="1" fill="#fff"/></svg>
<svg style="left:745px;top:81px;" width="17" height="13" viewBox="0 0 17 13"><rect x=".8" y=".8" width="15.4" height="11.4" rx="1" fill="none" stroke="#fff" stroke-width="1.5"/><path d="M8.5.8v11.4" stroke="#fff" stroke-width="1.5"/><path d="M10.5 3.5h4M10.5 5.5h4M10.5 7.5h4M10.5 9.5h4" stroke="#fff" stroke-width="1"/></svg>
<div style="left:282px;top:139px;width:843px;height:1px;background:#dcdcdc;"></div>
<div style="left:556px;top:116px;width:72px;height:24px;border:1px solid #d8d8d8;border-bottom:none;background:#f6f6f6;border-radius:2px 2px 0 0"></div>
<span class="t" style="left:296.5px;top:124.1px;font-size:10px;color:#555555;font-weight:400;">Basedata</span>
<span class="t" style="left:357.5px;top:124.1px;font-size:10px;color:#555555;font-weight:400;">Media</span>
<span class="t" style="left:405px;top:124.1px;font-size:10px;color:#555555;font-weight:400;">Attributes</span>
<span class="t" style="left:470px;top:124.1px;font-size:10px;color:#555555;font-weight:400;">Sale Information</span>
<span class="t" style="left:564.6px;top:124.1px;font-size:10px;color:#555555;font-weight:400;">Data Quality</span>
<span class="t" style="left:640px;top:124.1px;font-size:10px;color:#555555;font-weight:400;">System Data</span>
<div style="left:297px;top:157px;width:813px;height:151px;background:#d1eaf0;border-radius:2px"></div>
<span class="t" style="left:312px;top:164.1px;font-size:15.4px;color:#125064;font-weight:700;">Data Quality Summary</span>
<div style="left:312px;top:190px;width:371px;height:22px;background:#ffffff;"></div>
<div style="left:312px;top:212px;width:371px;height:22px;background:#fefaea;"></div>
<div style="left:312px;top:234px;width:371px;height:66px;background:#e0f3df;"></div>
<span class="t" style="left:317px;top:195.8px;font-size:9.9px;color:#111111;font-weight:700;">Elements</span>
<span class="t" style="left:502px;top:195.8px;font-size:9.9px;color:#111111;font-weight:700;">State</span>
<span class="t" style="left:317px;top:217.6px;font-size:10px;color:#444444;font-weight:400;">Texts Available</span>
<span class="t" style="left:502px;top:217.6px;font-size:10px;color:#444444;font-weight:400;">partly completed</span>
<span class="t" style="left:317px;top:239.6px;font-size:10px;color:#444444;font-weight:400;">Attributes Available</span>
<span class="t" style="left:502px;top:239.6px;font-size:10px;color:#444444;font-weight:400;">completed</span>
<span class="t" style="left:317px;top:261.6px;font-size:10px;color:#444444;font-weight:400;">Sale Information Available</span>
<span class="t" style="left:502px;top:261.6px;font-size:10px;color:#444444;font-weight:400;">completed</span>
<span class="t" style="left:317px;top:283.6px;font-size:10px;color:#444444;font-weight:400;">Images Available</span>
<span class="t" style="left:502px;top:283.6px;font-size:10px;color:#444444;font-weight:400;">completed</span>
<div style="left:303px;top:350px;width:807px;height:1px;background:#dcdcdc;"></div>
<div style="left:303px;top:324px;width:71px;height:27px;border:1px solid #d8d8d8;border-bottom:none;background:#f6f6f6;border-radius:2px 2px 0 0"></div>
<svg style="left:311px;top:332px;" width="18" height="13" viewBox="0 0 18 13"><rect width="18" height="13" fill="#012169"/><path d="M0 0L18 13M18 0L0 13" stroke="#fff" stroke-width="2.6"/><path d="M0 0L18 13M18 0L0 13" stroke="#c8102e" stroke-width="1"/><path d="M9 0v13M0 6.5h18" stroke="#fff" stroke-width="4"/><path d="M9 0v13M0 6.5h18" stroke="#c8102e" stroke-width="2.4"/></svg>
<span class="t" style="left:333.3px;top:333.1px;font-size:10px;color:#555555;font-weight:400;">English</span>
<svg style="left:385px;top:332px;" width="18" height="13" viewBox="0 0 18 13"><rect width="18" height="4.4" fill="#111"/><rect y="4.3" width="18" height="4.4" fill="#dd0000"/><rect y="8.6" width="18" height="4.4" fill="#ffce00"/></svg>
<span class="t" style="left:408px;top:333.1px;font-size:10px;color:#555555;font-weight:400;">German</span>
<svg style="left:464px;top:332px;" width="18" height="13" viewBox="0 0 18 13"><rect width="6" height="13" fill="#002395"/><rect x="6" width="6" height="13" fill="#f5f5f5"/><rect x="12" width="6" height="13" fill="#ed2939"/></svg>
<span class="t" style="left:486px;top:333.1px;font-size:10px;color:#555555;font-weight:400;">French</span>
<svg style="left:304px;top:360px;" width="6" height="6" viewBox="0 0 6 6"><path d="M0 0h6L0 6z" fill="#3cb55a"/></svg>
<svg style="left:306px;top:367.8px;opacity:0.75" width="14" height="14" viewBox="0 0 14 14"><rect x=".3" y=".3" width="13.4" height="13.4" rx="2" fill="#a9aaab"/><path d="M7.6 7.6h6.1v4.1a2 2 0 0 1-2 2H7.6z" fill="#4cbd64"/><path d="M7 0v14M0 7h14" stroke="#d4d5d6" stroke-width=".9"/><path d="M2.2 3.6h3M9 3.6h3.2M10.6 2v3.2M2.4 9.4l2.4 2.4M4.8 9.4l-2.4 2.4M9.2 10h2.8M9.2 11.6h2.8" stroke="#f4f4f4" stroke-width=".9"/></svg>
<span class="t" style="left:322.2px;top:369.2px;font-size:10px;color:#9a9a9a;font-weight:400;">Texts Available:</span>
<div style="left:464px;top:360px;width:127px;height:24px;background:#e4e4e4;"></div>
<span class="t" style="left:472.5px;top:369.8px;font-size:10.2px;color:#aaaaaa;font-weight:400;">completed</span>
<svg style="left:306px;top:421.8px;opacity:1" width="14" height="14" viewBox="0 0 14 14"><rect x=".3" y=".3" width="13.4" height="13.4" rx="2" fill="#a9aaab"/><path d="M7.6 7.6h6.1v4.1a2 2 0 0 1-2 2H7.6z" fill="#4cbd64"/><path d="M7 0v14M0 7h14" stroke="#d4d5d6" stroke-width=".9"/><path d="M2.2 3.6h3M9 3.6h3.2M10.6 2v3.2M2.4 9.4l2.4 2.4M4.8 9.4l-2.4 2.4M9.2 10h2.8M9.2 11.6h2.8" stroke="#f4f4f4" stroke-width=".9"/></svg>
<span class="t" style="left:322.2px;top:423.2px;font-size:10px;color:#727272;font-weight:400;">Attributes Available:</span>
<div style="left:464px;top:413px;width:127px;height:24px;background:#fcfcfc;border:1px solid #e3e3e3"></div>
<span class="t" style="left:472.5px;top:422.7px;font-size:10.2px;color:#6e6e6e;font-weight:400;">completed</span>
<svg style="left:306px;top:452.8px;opacity:1" width="14" height="14" viewBox="0 0 14 14"><rect x=".3" y=".3" width="13.4" height="13.4" rx="2" fill="#a9aaab"/><path d="M7.6 7.6h6.1v4.1a2 2 0 0 1-2 2H7.6z" fill="#4cbd64"/><path d="M7 0v14M0 7h14" stroke="#d4d5d6" stroke-width=".9"/><path d="M2.2 3.6h3M9 3.6h3.2M10.6 2v3.2M2.4 9.4l2.4 2.4M4.8 9.4l-2.4 2.4M9.2 10h2.8M9.2 11.6h2.8" stroke="#f4f4f4" stroke-width=".9"/></svg>
<span class="t" style="left:322.2px;top:454.2px;font-size:10px;color:#727272;font-weight:400;">Sale Information Available:</span>
<div style="left:464px;top:445px;width:127px;height:24px;background:#fcfcfc;border:1px solid #e3e3e3"></div>
<span class="t" style="left:472.5px;top:454.7px;font-size:10.2px;color:#6e6e6e;font-weight:400;">completed</span>
<svg style="left:306px;top:483.8px;opacity:1" width="14" height="14" viewBox="0 0 14 14"><rect x=".3" y=".3" width="13.4" height="13.4" rx="2" fill="#a9aaab"/><path d="M7.6 7.6h6.1v4.1a2 2 0 0 1-2 2H7.6z" fill="#4cbd64"/><path d="M7 0v14M0 7h14" stroke="#d4d5d6" stroke-width=".9"/><path d="M2.2 3.6h3M9 3.6h3.2M10.6 2v3.2M2.4 9.4l2.4 2.4M4.8 9.4l-2.4 2.4M9.2 10h2.8M9.2 11.6h2.8" stroke="#f4f4f4" stroke-width=".9"/></svg>
<span class="t" style="left:322.2px;top:485.2px;font-size:10px;color:#727272;font-weight:400;">Images Available:</span>
<div style="left:464px;top:476px;width:127px;height:24px;background:#fcfcfc;border:1px solid #e3e3e3"></div>
<span class="t" style="left:472.5px;top:485.7px;font-size:10.2px;color:#6e6e6e;font-weight:400;">completed</span>
<div style="left:1113px;top:561px;width:27px;height:27px;background:#222;border-radius:3px 0 0 0"></div>
<div style="left:1118.8px;top:566.8px;width:16.2px;height:16.2px;border-radius:50%;background:#c6c6c6"></div>
<svg style="left:1119px;top:567px;" width="16" height="16" viewBox="0 0 16 16"><path d="M13.3 3.6Q12.6 2.6 11.3 3.2Q10.2 3.8 9.3 6.5L7.6 11.6Q6.9 13.6 5.3 13.6Q4.4 13.6 4.2 12.9" fill="none" stroke="#1e1e1e" stroke-width="1.2" stroke-linecap="round"/><path d="M8 6.9H11.2" stroke="#1e1e1e" stroke-width=".9"/><path d="M7.6 6.6Q6.6 5.9 5.6 6.6Q4.8 7.4 5.8 8.3Q6.8 9.2 5.9 10.2Q4.9 10.9 3.8 10.3" fill="none" stroke="#1e1e1e" stroke-width="1.1" stroke-linecap="round"/><circle cx="13.2" cy="4.6" r=".7" fill="#1e1e1e"/></svg>
<svg style="left:949.6px;top:562px;" width="11" height="14" viewBox="0 0 11 14"><path d="M1 1v10.5l2.6-2.4 1.8 4 1.6-.7-1.8-3.9H9z" fill="#fff" stroke="#333" stroke-width="1"/></svg>
<div style="left:0px;top:587px;width:1140px;height:1px;background:#4d4d4d;"></div></body></html>
